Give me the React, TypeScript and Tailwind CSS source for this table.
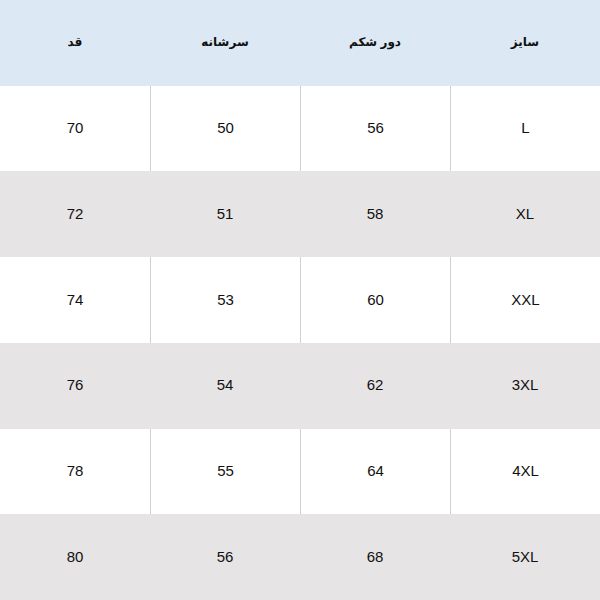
import React from "react";

const rows = [
  ["L", "56", "50", "70"],
  ["XL", "58", "51", "72"],
  ["XXL", "60", "53", "74"],
  ["3XL", "62", "54", "76"],
  ["4XL", "64", "55", "78"],
  ["5XL", "68", "56", "80"],
];

const headers = ["سایز", "دور شکم", "سرشانه", "قد"];

export default function App() {
  return (
    <div
      dir="rtl"
      className="w-[600px] h-[600px] grid grid-rows-[repeat(7,1fr)] bg-white text-[#111]"
      style={{ fontFamily: '"Liberation Sans", Arial, "DejaVu Sans", sans-serif' }}
    >
      <div className="grid grid-cols-4 bg-[#dce9f5]">
        {headers.map((h) => (
          <div key={h} className="flex items-center justify-center text-[12px] font-bold pb-[2px]">
            {h}
          </div>
        ))}
      </div>
      {rows.map((r, i) => {
        const gray = i % 2 === 1;
        return (
          <div key={i} className={gray ? "grid grid-cols-4 bg-[#e6e4e5]" : "grid grid-cols-4 bg-white"}>
            {r.map((c, j) => (
              <div
                key={j}
                className={
                  !gray && j < 3
                    ? "flex items-center justify-center text-[15px] border-l border-[#d0d0d0]"
                    : "flex items-center justify-center text-[15px]"
                }
              >
                <span dir="ltr">{c}</span>
              </div>
            ))}
          </div>
        );
      })}
    </div>
  );
}
